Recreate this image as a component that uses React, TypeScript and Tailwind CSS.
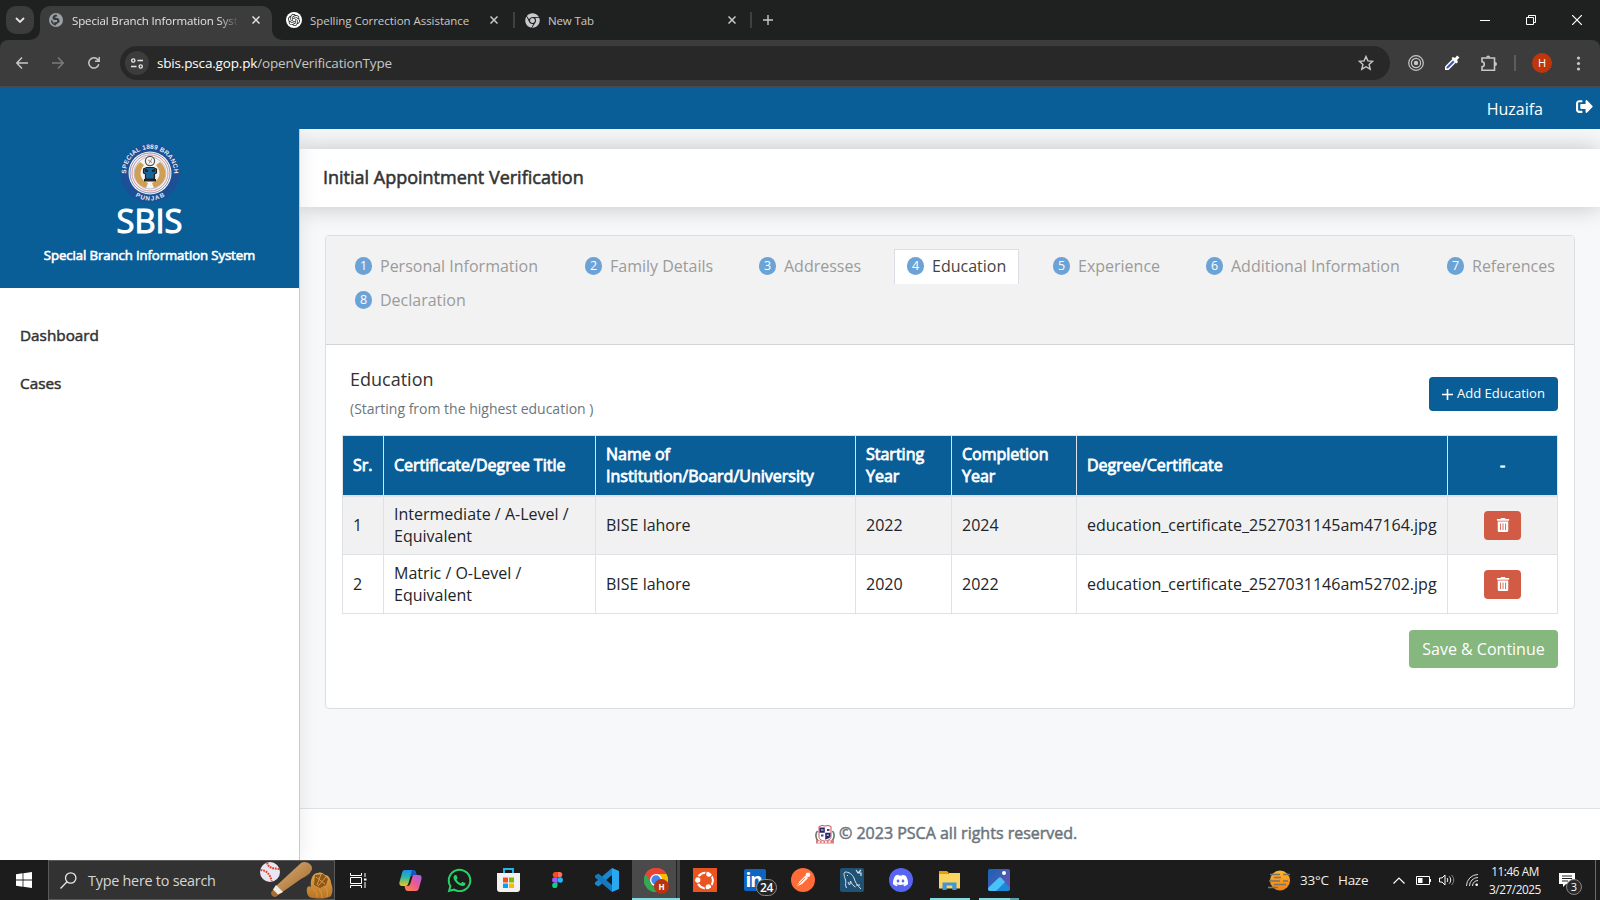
import type { ReactNode } from "react";
import { FaSignOutAlt, FaTrashAlt, FaChrome, FaWhatsapp } from "react-icons/fa";
import { SiUbuntu, SiOpenai, SiDiscord } from "react-icons/si";

const UI = "font-['Open_Sans',sans-serif]";

function Close({ className }: { className: string }) {
  return (
    <svg className={className} viewBox="0 0 8 8" stroke="currentColor" strokeWidth="1.5">
      <path d="M.5.5l7 7M7.5.5l-7 7" />
    </svg>
  );
}

function TabStrip() {
  return (
    <div className="flex h-10 items-center bg-[#1f2120] text-[11.5px] text-[#c8c9c8]">
      <div className="ml-1.5 flex size-7 items-center justify-center rounded-[10px] bg-[#3c3c3c] text-[#e3e3e3]">
        <svg className="w-2.5" viewBox="0 0 10 6" fill="none" stroke="currentColor" strokeWidth="1.8">
          <path d="M1 1l4 4 4-4" />
        </svg>
      </div>
      <div className="relative ml-1.5 flex h-[34px] w-[232px] items-center self-end rounded-t-[10px] bg-[#3c3c3c] text-[#e3e3e3]">
        <svg className="absolute -left-2.5 bottom-0 size-2.5" viewBox="0 0 10 10" fill="#3c3c3c"><path d="M10 0v10H0A10 10 0 0 0 10 0" /></svg>
        <svg className="absolute -right-2.5 bottom-0 size-2.5" viewBox="0 0 10 10" fill="#3c3c3c"><path d="M0 0v10h10A10 10 0 0 1 0 0" /></svg>
        <svg className="-mt-1.5 ml-[9px] size-3.5" viewBox="0 0 14 14">
          <circle cx="7" cy="7" r="7" fill="#9aa0a8" />
          <path d="M7.500 1.500C5 1.500 3.500 3 3.500 5c0 1.500 1 2 2.500 2h2v2H6l-1.500 1.500V9L2 6.800c-.3 3.200 2 5.700 5 5.700 0-1 .5-1.500 1.500-2l2-1.500V7L9 5H6.500V3.500h2z" fill="#3c3c3c" />
        </svg>
        <div className="-mt-1 ml-[9px] w-[168px] overflow-hidden whitespace-nowrap tracking-[-0.14px] [mask-image:linear-gradient(to_right,#000_147px,transparent_167px)]">
          Special Branch Information System
        </div>
        <Close className="-mt-1.5 ml-3 size-2" />
      </div>
      <div className="ml-3.5 flex size-4 items-center justify-center rounded-full bg-white text-[#222]">
        <SiOpenai className="size-3" />
      </div>
      <div className="mt-px ml-2 w-[180px] whitespace-nowrap tracking-[-0.04px]">Spelling Correction Assistance</div>
      <Close className="size-2" />
      <div className="ml-[15px] h-4 w-0.5 bg-[#3f403f]" />
      <FaChrome className="ml-2.5 size-[15px] text-[#c8c9cb]" />
      <div className="mt-px ml-2 w-[180px] tracking-[-0.14px]">New Tab</div>
      <Close className="size-2" />
      <div className="ml-3.5 h-4 w-0.5 bg-[#3f403f]" />
      <svg className="ml-[11px] size-2.5" viewBox="0 0 10 10" stroke="currentColor" strokeWidth="1.4"><path d="M5 0v10M0 5h10" /></svg>
      <div className="ml-auto mr-[18px] flex items-center gap-9 text-white">
        <div className="h-px w-2.5 bg-white" />
        <svg className="size-2.5" viewBox="0 0 10 10" fill="none" stroke="currentColor"><path d="M.5 2.500h7v7h-7zM2.500 2.500v-2h7v7h-2" /></svg>
        <svg className="size-2.5" viewBox="0 0 10 10" stroke="currentColor" strokeWidth="1.200"><path d="M0 0l10 10M10 0L0 10" /></svg>
      </div>
    </div>
  );
}

function Toolbar() {
  return (
    <div className="bg-[#1f2120]">
      <div className="flex h-[47px] items-center rounded-t-[8px] border-b border-[#4a4a4a] bg-[#3c3c3c] text-[#c7c7c7]">
        <svg className="ml-4 size-3" viewBox="0 0 12 12" fill="none" stroke="currentColor" strokeWidth="1.500"><path d="M6 .6L.8 6 6 11.400M1 6h11" /></svg>
        <svg className="ml-6 size-3 text-[#7b7b7b]" viewBox="0 0 12 12" fill="none" stroke="currentColor" strokeWidth="1.500"><path d="M6 .6L11.200 6 6 11.400M11 6H0" /></svg>
        <svg className="ml-6 size-3" viewBox="0 0 12 12" fill="none" stroke="currentColor" strokeWidth="1.500"><path d="M10.800 7.300A5.100 5.100 0 1 1 9.900 2.800L11 4M11.200 0v4.200H7" /></svg>
        <div className="ml-5 flex h-[34px] w-[1270px] items-center rounded-full bg-[#282828]">
          <div className="ml-[5px] flex size-6 items-center justify-center rounded-full bg-[#3c3c3c] text-[#e3e3e3]">
            <svg className="h-[11px] w-3" viewBox="0 0 12 11" fill="none" stroke="currentColor" strokeWidth="1.400"><circle cx="2.300" cy="2.500" r="1.600" /><path d="M6.500 2.500H12M0 8.500h5.500" /><circle cx="9.700" cy="8.500" r="1.600" /></svg>
          </div>
          <div className="ml-2 whitespace-nowrap text-[13.5px] tracking-[-0.17px] text-[#c4c7c5]">
            <span className="text-white">sbis.psca.gop.pk</span>/openVerificationType
          </div>
          <svg className="ml-auto mr-4 size-4" viewBox="0 0 16 16" fill="none" stroke="currentColor" strokeWidth="1.400"><path d="M8 1.500l1.900 4.400 4.800.4-3.600 3.200 1.100 4.700L8 11.700l-4.200 2.500 1.100-4.700L1.300 6.300l4.800-.4z" /></svg>
        </div>
        <svg className="ml-[18px] size-4" viewBox="0 0 16 16" fill="none" stroke="currentColor" strokeWidth="1.200"><circle cx="8" cy="8" r="7.300" /><circle cx="8" cy="8" r="4.600" /><circle cx="8" cy="8" r="2.200" fill="currentColor" stroke="none" /></svg>
        <svg className="ml-5 size-4" viewBox="0 0 16 16"><path d="M9 3.500L1 11.500V15h3.500l8-8z" fill="#fff" /><path d="M9 5.500L2.500 12v1.500H4l6.500-6.500z" fill="#3d55c4" /><path d="M7.500 3l1.500-1 2 1 2-2.500 2.500 2L13 5l1 2-1.500 1.500z" fill="#fff" /></svg>
        <svg className="ml-[21px] h-[17px] w-4" viewBox="0 0 16 17" fill="none" stroke="currentColor" strokeWidth="1.600"><path d="M1 3h12.500v12.200H1v-3.400c3 0 3-5 0-5z" /><path d="M5.200 2.500a2 2 0 0 1 4 0zM14 7a2 2 0 0 1 0 4z" fill="currentColor" stroke="none" /></svg>
        <div className="ml-[17px] h-4 w-0.5 bg-[#5c5c5c]" />
        <div className="ml-4 flex size-5 items-center justify-center rounded-full bg-[#bf360c] text-[11px] text-white">H</div>
        <svg className="ml-[24px] h-[15px] w-[5px]" viewBox="0 0 5 15" fill="currentColor"><circle cx="2.500" cy="2" r="1.600" /><circle cx="2.500" cy="7.500" r="1.600" /><circle cx="2.500" cy="13" r="1.600" /></svg>
      </div>
    </div>
  );
}

function Emblem() {
  return (
    <svg className="size-[60px]" viewBox="0 0 60 60" fontFamily="Liberation Sans, sans-serif" fontWeight="bold">
      <circle cx="30" cy="30" r="29.500" fill="#1c4f95" />
      <circle cx="30" cy="30" r="21.500" fill="#f6f4f2" />
      <circle cx="30" cy="30" r="20" fill="none" stroke="#6d7fb4" strokeWidth=".8" />
      <circle cx="30" cy="30" r="18" fill="none" stroke="#c77d86" strokeWidth=".8" />
      <circle cx="30" cy="30" r="16" fill="none" stroke="#8b98bf" strokeWidth=".6" />
      <path d="M20 19c-9 8-7 22 6 26l2-5c-8-3-10-11-4-18zM40 19c9 8 7 22-6 26l-2-5c8-3 10-11 4-18z" fill="#cf9f55" />
      <circle cx="30" cy="18" r="4.600" fill="#f6f4f2" stroke="#555" strokeWidth="1.200" />
      <path d="M28 17l4 2.500M32 15.500l-3 5" stroke="#777" strokeWidth=".8" />
      <path d="M23.500 26l3-1.500h7l3 1.500v4l-2 1v5h-9v-5l-2-1z" fill="#17649b" stroke="#222" strokeWidth="1.200" />
      <path d="M24 36h12v2.500H24zM25 26l3 1v2l-3-.5zM35 26l-3 1v2l3-.5z" fill="#222" />
      <path id="ring-top" d="M6.200 32A23.900 23.900 0 1 1 53.800 32" fill="none" />
      <path id="ring-bottom" d="M10.500 49.400A27.500 27.500 0 0 0 49.500 49.400" fill="none" />
      <text fontSize="6.400" fill="#e6edf5"><textPath href="#ring-top" startOffset="50%" textAnchor="middle" textLength="76">SPECIAL 1889 BRANCH</textPath></text>
      <text fontSize="6.200" fill="#e6edf5"><textPath href="#ring-bottom" startOffset="50%" textAnchor="middle" textLength="31">PUNJAB</textPath></text>
    </svg>
  );
}

function Sidebar() {
  return (
    <aside className="relative z-10 w-[300px] border-r border-[#c9cbd0] bg-white shadow-[0_0_20px_rgba(0,0,0,0.09)] [clip-path:inset(0_-24px_0_0)]">
      <div className="flex h-[159px] flex-col items-center bg-[#0a5e97] pt-3.5 text-white">
        <Emblem />
        <div className="text-[32.6px] leading-[36px] [-webkit-text-stroke:1.1px]">SBIS</div>
        <div className="mt-[6px] whitespace-nowrap text-[13.2px] leading-5 tracking-[-0.1px] [-webkit-text-stroke:0.6px]">Special Branch Information System</div>
      </div>
      <nav className="flex flex-col gap-6 pt-[35px] pl-5 text-[15.3px] leading-6 text-[#333] [-webkit-text-stroke:0.5px]">
        <a>Dashboard</a>
        <a>Cases</a>
      </nav>
    </aside>
  );
}

const steps = [
  { label: "Personal Information", width: "w-[230px]" },
  { label: "Family Details", width: "w-[174px]" },
  { label: "Addresses", width: "w-[148px]" },
  { label: "Education", width: "w-[146px]" },
  { label: "Experience", width: "w-[153px]" },
  { label: "Additional Information", width: "w-[241px]" },
  { label: "References", width: "w-[130px]" },
  { label: "Declaration", width: "w-[230px]" },
];

function Steps() {
  return (
    <div className="flex h-[109px] flex-wrap content-start border-b border-[#d3d5d8] bg-[#f2f2f2] pt-[13px] pl-4">
      {steps.map((s, i) => {
        const active = i === 3;
        return (
          <div key={s.label} className={`${s.width} flex h-[34px]`}>
            <div className={`flex h-[35px] items-center border border-b-0 px-3 pb-0.5 ${active ? "border-[#dcdde6] bg-white text-[#444]" : "border-transparent text-[#9b9b9b]"}`}>
              <span className="flex h-[18px] w-[17px] items-center justify-center rounded-full bg-[#6ca3d6] text-[12.5px] leading-none text-white">{i + 1}</span>
              <span className="ml-2 whitespace-nowrap text-[16px] leading-6">{s.label}</span>
            </div>
          </div>
        );
      })}
    </div>
  );
}

const rows = [
  ["1", "Intermediate / A-Level / Equivalent", "BISE lahore", "2022", "2024", "education_certificate_2527031145am47164.jpg"],
  ["2", "Matric / O-Level / Equivalent", "BISE lahore", "2020", "2022", "education_certificate_2527031146am52702.jpg"],
];
const heads = ["Sr.", "Certificate/Degree Title", "Name of Institution/Board/University", "Starting Year", "Completion Year", "Degree/Certificate"];

function EducationTable() {
  return (
    <table className="w-[1216px] table-fixed border-collapse text-left text-[16px] leading-[22px] text-[#212529]">
      <colgroup>
        <col className="w-[41px]" /><col className="w-[212px]" /><col className="w-[260px]" /><col className="w-[96px]" />
        <col className="w-[125px]" /><col className="w-[371px]" /><col className="w-[110px]" />
      </colgroup>
      <thead>
        <tr className="h-[60px] bg-[#0a5e97] text-white">
          {heads.map((h) => (
            <th key={h} className="border border-b-2 border-[#dee2e6] px-2.5 font-normal [-webkit-text-stroke:0.8px]">{h}</th>
          ))}
          <th className="border border-b-2 border-[#dee2e6] text-center font-normal [-webkit-text-stroke:0.8px]">-</th>
        </tr>
      </thead>
      <tbody>
        {rows.map((r, i) => (
          <tr key={r[0]} className={`h-[59px] ${i === 0 ? "bg-[#f1f1f1]" : "bg-white"}`}>
            {r.map((c, j) => (
              <td key={j} className="border border-[#dee2e6] px-2.5">{c}</td>
            ))}
            <td className="border border-[#dee2e6]">
              <button className="mx-auto flex h-[29px] w-[37px] items-center justify-center rounded-[4px] bg-[#d25b46] text-white">
                <FaTrashAlt className="size-3.5" />
              </button>
            </td>
          </tr>
        ))}
      </tbody>
    </table>
  );
}

function PscaMark() {
  return (
    <svg className="h-[19px] w-5" viewBox="0 0 20 19">
      <path d="M2.500 6C0 9 .5 14 3.500 16M17.500 6c2.500 3 2 8-1 10" stroke="#65796b" strokeWidth="1.600" fill="none" />
      <path d="M4 1.500l3-1 3 .5 3-.5 3 1v10c0 3-3 4-6 5-3-1-6-2-6-5z" fill="#fff" stroke="#d24b55" />
      <path d="M4.500 2.500h5.300v5.300H4.500zM10.200 7.800h5.300v4c-1 1.500-3 2-5.300 3z" fill="#29286e" />
      <path d="M12 4h2.500v2H12zM6 9.500h2.500v2H6z" fill="#47467f" />
      <path d="M6 4.300h2.500v1.500H6zM11.700 9.500h2.200v1.500h-2.200z" fill="#aeb0d0" />
      <path d="M1 14.500l3 1h12l3-1v4H1z" fill="#e27a80" />
      <path d="M3 17h14" stroke="#fff" strokeWidth="1.300" strokeDasharray="2 1.500" />
    </svg>
  );
}

function Page() {
  return (
    <div className="flex h-[773px] flex-col">
      <header className="flex h-[42px] shrink-0 items-center justify-end bg-[#0a5e97] pr-[7px] text-[16px] text-white">
        <span className="mt-0.5">Huzaifa</span>
        <FaSignOutAlt className="-mt-[3px] ml-[33px] size-[17px]" />
      </header>
      <div className="flex h-[731px]">
        <Sidebar />
        <main className="flex w-[1300px] flex-col overflow-hidden bg-[#f7f8fa] pt-5">
          <div className="flex h-[58px] shrink-0 items-center bg-white pl-[23px] text-[18px] text-[#333] shadow-[0_0_24px_rgba(0,0,0,0.22)]">
            <h1 className="-mt-px whitespace-nowrap [-webkit-text-stroke:0.55px]">Initial Appointment Verification</h1>
          </div>
          <section className="mt-7 ml-[25px] h-[474px] w-[1250px] shrink-0 overflow-hidden rounded-[4px] border border-[#dcdee1] bg-white">
            <Steps />
            <div className="flex h-[90px] pr-4 pl-6">
              <div className="pt-5">
                <h2 className="text-[18px] leading-7 text-[#333]">Education</h2>
                <p className="mt-1 text-[14px] leading-6 text-[#6c757d]">(Starting from the highest education )</p>
              </div>
              <button className="mt-8 ml-auto flex h-[34px] w-[129px] items-center justify-center rounded-[4px] bg-[#0a5e97] text-[13px] whitespace-nowrap text-white">
                <svg className="mr-1 size-[11px]" viewBox="0 0 11 11" stroke="currentColor" strokeWidth="1.600"><path d="M5.500 0v11M0 5.500h11" /></svg>
                Add Education
              </button>
            </div>
            <div className="pl-4"><EducationTable /></div>
            <button className="mt-4 mr-4 ml-auto flex h-[38px] w-[149px] items-center justify-center rounded-[4px] bg-[#86b77e] text-[16px] text-white">Save &amp; Continue</button>
          </section>
          <footer className="mt-auto flex h-[52px] shrink-0 items-center border-t border-[#dee2e6] bg-white pl-[515px] text-[16px] text-[#6c757d]">
            <PscaMark />
            <span className="-mt-[3px] ml-1 [-webkit-text-stroke:0.5px]">© 2023 PSCA all rights reserved.</span>
          </footer>
        </main>
      </div>
    </div>
  );
}

function Slot({ children, className = "" }: { children: ReactNode; className?: string }) {
  return <div className={`relative flex h-10 w-[49px] shrink-0 items-center justify-center ${className}`}>{children}</div>;
}

function SearchArt() {
  return (
    <svg className="ml-auto h-[38px] w-[75px]" viewBox="0 0 75 38">
      <defs>
        <linearGradient id="bat" x1="0" y1="0" x2="1" y2="1"><stop stopColor="#e2b37a" /><stop offset="1" stopColor="#9a6429" /></linearGradient>
        <linearGradient id="glove" x1="0" y1="0" x2="0" y2="1"><stop stopColor="#e3a64c" /><stop offset="1" stopColor="#b87322" /></linearGradient>
      </defs>
      <circle cx="11" cy="11" r="10" fill="#e9e6f2" />
      <path d="M8 1.500c1 5 5 6 12 6.500M1.500 9c5 0 10 4 11 11" fill="none" stroke="#d9472f" strokeWidth="2" strokeDasharray="1.800 .9" />
      <path d="M16 26L42 2c4-3 12 1 11 6-1 4-5 7-11 10L22 32z" fill="url(#bat)" />
      <path d="M16 27l-3 3c-3 3 2 8 5 5l4-3z" fill="#a96c2d" />
      <path d="M17 24l7 7-5 2.500-5-5z" fill="#f3ede4" />
      <path d="M48 27c1-2 3-2 4-1-1-6 1-14 7-14 3-1 5 0 7 2 4 0 6 5 6 8 2 4 2 9 0 13-5 3-11 3-18 2-5 0-7-5-6-10z" fill="url(#glove)" />
      <path d="M56 14l8-1 5 5-2 6-6 3-6-3z" fill="#8d5717" />
      <path d="M57 16l9 7M62 13l-4 11M67 16l-8 9M54 28c2 1 4 3 4 8M60 28c2 3 3 5 3 9M66 25c2 3 3 6 2 11" stroke="#d99a44" fill="none" />
    </svg>
  );
}

function Taskbar() {
  return (
    <div className="flex h-10 items-center bg-[#1c1c1c] text-white">
      <div className="flex w-12 justify-center">
        <svg className="size-4" viewBox="0 0 16 16" fill="#fff"><path d="M0 2.200l6.600-.9v6.300H0zM7.400 1.200L16 0v7.600H7.400zM0 8.400h6.600v6.300L0 13.800zM7.400 8.400H16V16l-8.600-1.200z" /></svg>
      </div>
      <div className="flex h-10 w-[287px] items-center border border-[#5a5a5a] bg-[#323232]">
        <svg className="ml-[11px] size-[17px]" viewBox="0 0 17 17" fill="none" stroke="#e8e8e8" strokeWidth="1.300"><circle cx="10.700" cy="6" r="5.200" /><path d="M7 9.800L.5 16.500" /></svg>
        <span className="mt-px ml-[11px] whitespace-nowrap text-[14.4px] tracking-[-0.25px] text-[#d6d6d6]">Type here to search</span>
        <SearchArt />
      </div>
      <div className="flex w-[51px] justify-center pr-1">
        <svg className="h-[15px] w-[17px]" viewBox="0 0 17 15" fill="none" stroke="#fff"><path d="M.5 0v2.500h11V0M.5 15v-2.500h11V15M.5 4.500h11v6H.500zM15 0v4M15 9v6" /><path d="M14 5.500h2.500v2H14z" fill="#fff" stroke="none" /></svg>
      </div>
      <Slot>
        <svg className="h-[21px] w-[23px]" viewBox="0 0 23 21">
          <defs>
            <linearGradient id="cpA" x1="0" y1="0" x2="0" y2="1"><stop stopColor="#1a8ff0" /><stop offset=".45" stopColor="#2bb9a4" /><stop offset="1" stopColor="#f4c51c" /></linearGradient>
            <linearGradient id="cpB" x1="1" y1="0" x2="0" y2="1"><stop stopColor="#a65cf0" /><stop offset=".5" stopColor="#ee5c8c" /><stop offset="1" stopColor="#fb8f3a" /></linearGradient>
          </defs>
          <path d="M6 0h8c2 0 2.500 1 3 3l.5 2h-3c-2 0-3 1-3.500 3l-1.500 5c-.5 2-1.500 3-3 3H3c-2 0-3-1.500-2.500-4L3 3c.5-2 1.200-3 3-3z" fill="url(#cpA)" />
          <path d="M14 5h6c2 0 3 1.500 2.500 4L20 18c-.5 2-1.200 3-3 3H9c-2 0-2.500-1-3-3l-.5-2h3c1.500 0 2.500-1 3-3z" fill="url(#cpB)" />
          <path d="M13 0c2.500 0 3.500 1 4.500 5h-3c-2 0-3 1-3.500 2z" fill="#1653c8" />
        </svg>
      </Slot>
      <Slot><FaWhatsapp className="size-[27px] text-[#25d366]" /></Slot>
      <Slot>
        <svg className="h-6 w-[23px]" viewBox="0 0 23 24"><path d="M7 6V1h9v5" fill="none" stroke="#28b4e8" strokeWidth="2" /><path d="M0 5h23v16a3 3 0 0 1-3 3H3a3 3 0 0 1-3-3z" fill="#f2f2f2" /><path d="M6 9.500h5v5H6z" fill="#f25022" /><path d="M12 9.500h5v5h-5z" fill="#7fba00" /><path d="M6 15.500h5v4.500H6z" fill="#00a4ef" /><path d="M12 15.500h5v4.500h-5z" fill="#ffb900" /></svg>
      </Slot>
      <Slot>
        <svg className="h-4 w-[11px]" viewBox="0 0 11 16"><path d="M5.500 0H2.800a2.700 2.700 0 0 0 0 5.300h2.700z" fill="#f24e1e" /><path d="M5.500 0h2.700a2.700 2.700 0 0 1 0 5.300H5.500z" fill="#ff7262" /><path d="M5.500 5.300H2.800a2.700 2.700 0 0 0 0 5.400h2.700z" fill="#a259ff" /><circle cx="8.200" cy="8" r="2.700" fill="#1abcfe" /><path d="M5.500 10.700H2.800a2.700 2.700 0 1 0 2.700 2.600z" fill="#0acf83" /></svg>
      </Slot>
      <Slot>
        <svg className="size-6" viewBox="0 0 24 24"><path d="M17 0l7 3v18l-7 3z" fill="#2aa8f2" /><path d="M17 0v7L3.500 18.500 0 16.500v-2z" fill="#1787cf" /><path d="M17 24v-7L3.500 5.500 0 7.500v2z" fill="#1579bd" /></svg>
      </Slot>
      <Slot className="bg-[linear-gradient(to_right,transparent_1px,#4a4a4a_1px,#4a4a4a_45px,#222_45px,#222_46px,#454545_46px)]">
        <svg className="size-6" viewBox="0 0 24 24"><circle cx="12" cy="12" r="12" fill="#34a853" /><path d="M12 12L1.600 6A12 12 0 0 1 22.400 6z" fill="#ea4335" /><path d="M12 6h10.400A12 12 0 0 1 12 24l5.200-9z" fill="#fbbc04" /><path d="M1.600 6l5.200 9L12 12V6l5-.2H22.400A12 12 0 0 0 1.600 6z" fill="#ea4335" /><path d="M1.600 6A12 12 0 0 0 12 24l5.200-9H6.800z" fill="#34a853" /><circle cx="12" cy="12" r="6" fill="#fff" /><circle cx="12" cy="12" r="4.700" fill="#4285f4" /></svg>
        <div className="absolute top-[19px] left-[23px] flex size-[15px] items-center justify-center rounded-full bg-[#b9340e] text-[8px] font-bold">H</div>
        <div className="absolute bottom-0 left-px h-0.5 w-12 bg-[#84dbe4]" />
      </Slot>
      <Slot><div className="flex size-6 items-center justify-center bg-[#e95420]"><SiUbuntu className="size-[19px] rounded-full bg-[#e95420] text-white" /></div></Slot>
      <Slot>
        <div className="-mr-0.5 flex size-[22px] items-end rounded-[2px] bg-[#0a66c2] pl-0.5 text-[19px] leading-[21px] font-bold tracking-[-1px]">in</div>
        <div className="absolute top-[19px] left-[27px] flex h-[17px] w-[21px] items-center justify-center rounded-full border border-[#8c8c8c] bg-[#242424] text-[12px] font-semibold tracking-[-0.3px]">24</div>
      </Slot>
      <Slot>
        <svg className="size-6" viewBox="0 0 24 24"><circle cx="12" cy="12" r="12" fill="#ff6c37" /><path d="M5.500 18.500l3-5 6-6 2.500 2.500-6 6z" fill="#fff" /><path d="M5.500 18.500L14 10" stroke="#ff6c37" strokeWidth=".8" /><circle cx="17" cy="6.700" r="2.300" fill="#fff" /></svg>
      </Slot>
      <Slot>
        <svg className="size-6" viewBox="0 0 24 24"><rect width="24" height="24" rx="2" fill="#1f5275" /><path d="M6.500 20c-2-3 0-6-1-8C4.500 9 3 5 5 4c4 0 7 2 9 6 1 4 3 7 7 11M8 14l1.500 3c1-1 .5-3 1-4 1 3 3 5 5 6M16 17l4 0M7 7l1 1" fill="none" stroke="#d8e5ee" strokeWidth="1" /><path d="M16 2l2 3h3v3M18 5l3-3" fill="none" stroke="#d8e5ee" strokeWidth="1.200" /></svg>
      </Slot>
      <Slot><div className="flex size-6 items-center justify-center rounded-full bg-[#5865f2]"><SiDiscord className="size-[15px]" /></div></Slot>
      <Slot>
        <svg className="h-[19px] w-[23px]" viewBox="0 0 23 19"><path d="M1 0h8l2 2h-1v5H1z" fill="#e3a008" /><path d="M1 3h9l1-1h11v15.500H1z" fill="#fcd462" /><path d="M4.500 19v-7.500h14V19h-4.200v-4.500H8.700V19z" fill="#3d97d9" /></svg>
        <div className="absolute bottom-0 left-[5px] h-0.5 w-10 bg-[#84dbe4]" />
      </Slot>
      <Slot>
        <svg className="size-[22px]" viewBox="0 0 22 22"><defs><linearGradient id="ph" x1="0" y1="0" x2="1" y2="1"><stop stopColor="#1265b8" /><stop offset="1" stopColor="#7a4fae" /></linearGradient></defs><rect width="22" height="22" rx="2" fill="url(#ph)" /><path d="M1 20L11 9.500c1-1 1.500-1 2.500 0L22 19a3 3 0 0 1-2 3H3z" fill="#1b88d8" /><path d="M0 19L10.500 9c1-1 2-1 3 0l3.500 4L8 22H2a2 2 0 0 1-2-2z" fill="#48c2f7" /><circle cx="16" cy="4" r="2" fill="#fff" /></svg>
        <div className="absolute bottom-0 left-[5px] h-0.5 w-10 bg-[linear-gradient(to_right,#84dbe4_31px,#5ba3ab_31px)]" />
      </Slot>

      <svg className="ml-[245px] h-[21px] w-6" viewBox="0 0 24 21"><defs><linearGradient id="sun" x1="0" y1="0" x2="0" y2="1"><stop stopColor="#ffb62c" /><stop offset="1" stopColor="#f08010" /></linearGradient></defs><circle cx="12" cy="10.500" r="10" fill="url(#sun)" /><path d="M2 4.500h10M15 4.500h7M6 7.500h7M1 11h11M15 11h5M6 14.500h12M0 17.500h10" stroke="#77736d" strokeWidth="1.700" /></svg>
      <span className="ml-2 w-[38px] text-[13.500px] tracking-[-0.2px] whitespace-nowrap text-[#eee]">33°C</span>
      <span className="w-[55px] text-[13.500px] tracking-[-0.3px] text-[#eee]">Haze</span>
      <svg className="h-[7px] w-3" viewBox="0 0 12 7" fill="none" stroke="#fff" strokeWidth="1.200"><path d="M.5 6.500L6 1l5.500 5.500" /></svg>
      <svg className="ml-[11px] h-[9px] w-[15px]" viewBox="0 0 15 9" fill="none" stroke="#fff"><path d="M.5.5h13v8H.500zM14.500 3v3" /><path d="M2 2h4.500v5H2z" fill="#fff" stroke="none" /></svg>
      <svg className="ml-2 h-3.5 w-4" viewBox="0 0 16 14" fill="none" stroke="#fff"><path d="M.5 5v4H3l3 3V2L3 5zM8 5c1 1 1 3 0 4M10.200 3.500c2 2 2 5 0 7" /><path d="M12.500 2c3 3 3 7 0 10" stroke="#888" /></svg>
      <svg className="ml-[11px] size-3" viewBox="0 0 12 12" fill="none" stroke="#ddd"><path d="M.5 12A11.500 11.500 0 0 1 12 .5M3.500 12A8.500 8.500 0 0 1 12 3.500M6.500 12A5.500 5.500 0 0 1 12 6.500" /><circle cx="10.700" cy="10.700" r="1.300" fill="#fff" stroke="none" /></svg>
      <div className="ml-2.5 w-[54px] text-center text-[11.800px] leading-[18px] tracking-[-0.45px] whitespace-nowrap text-[#f2f2f2]">
        <div>11:46 AM</div>
        <div>3/27/2025</div>
      </div>
      <div className="relative ml-[17px] size-4">
        <svg className="size-4" viewBox="0 0 16 16"><path d="M0 1h16v11H7l-3 3v-3H0z" fill="#fff" /><path d="M3 4h10M3 6.500h10M3 9h6" stroke="#222" /></svg>
        <div className="absolute top-[7px] left-[7px] flex size-4 items-center justify-center rounded-full border border-[#868686] bg-[#2a2a2a] text-[11px]">3</div>
      </div>
      <div className="ml-auto mr-1 h-10 w-px bg-[#6a6a6a]" />
    </div>
  );
}

export default function App() {
  return (
    <div className={`h-[900px] w-[1600px] overflow-hidden bg-white ${UI}`}>
      <TabStrip />
      <Toolbar />
      <Page />
      <Taskbar />
    </div>
  );
}
